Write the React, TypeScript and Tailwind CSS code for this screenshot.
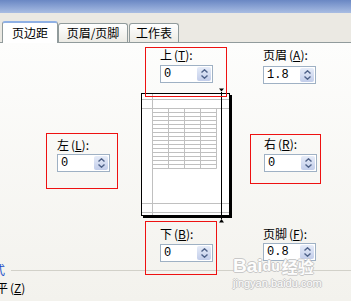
import React from "react";

function Spin({ value }: { value: string }) {
  return (
    <div className="flex h-[18px] w-[53px] border border-[#9fb1c4] bg-white">
      <div className="flex-1 pl-[3px] font-['Liberation_Mono',monospace] text-[12px] leading-[16px] text-black">
        {value}
      </div>
      <div className="m-[1px] flex w-[14px] flex-col items-center justify-center gap-[2px] rounded-[2px] bg-gradient-to-b from-[#e6ecf8] to-[#c2cdea]">
        <svg width="7" height="4" viewBox="0 0 7 4">
          <path d="M0.5 3.5 L3.5 0.8 L6.5 3.5" stroke="#4f6289" strokeWidth="1.4" fill="none" />
        </svg>
        <svg width="7" height="4" viewBox="0 0 7 4">
          <path d="M0.5 0.5 L3.5 3.2 L6.5 0.5" stroke="#4f6289" strokeWidth="1.4" fill="none" />
        </svg>
      </div>
    </div>
  );
}

function Label({ main, k }: { main: string; k: string }) {
  return (
    <div className="h-[14px] whitespace-nowrap text-[12px] leading-[14px] text-black">
      {main}
      <span className="ml-[2px]">(</span>
      <span className="underline">{k}</span>
      <span>):</span>
    </div>
  );
}

function PagePreview() {
  const rows: number[] = [];
  for (let i = 0; i <= 15; i++) rows.push(20.5 + i * 4);
  const cols = [11.5, 27.5, 43.5, 59.5, 75.5];
  return (
    <svg width="92" height="135" viewBox="0 0 92 135" className="-mt-[5px] block shrink-0">
      <rect x="2" y="7" width="89" height="123" fill="#000" />
      <rect x="0.5" y="5.5" width="88" height="122" fill="#fff" stroke="#000" />
      <g stroke="#c0c0c0" strokeWidth="1">
        <line x1="1" y1="11.5" x2="88" y2="11.5" />
        <line x1="1" y1="20.5" x2="88" y2="20.5" />
        <line x1="1" y1="115.5" x2="88" y2="115.5" />
        <line x1="1" y1="124.5" x2="88" y2="124.5" />
        <line x1="11.5" y1="6" x2="11.5" y2="127" />
        {rows.map((y) => (
          <line key={y} x1="11.5" y1={y} x2="75.5" y2={y} />
        ))}
        {cols.map((x) => (
          <line key={x} x1={x} y1="20.5" x2={x} y2="80.5" />
        ))}
      </g>
      <line x1="80.5" y1="4" x2="80.5" y2="131" stroke="#000" strokeWidth="1" />
      <polygon points="78,0.5 83,0.5 80.5,3.5" fill="#000" />
      <polygon points="78,134.5 83,134.5 80.5,131" fill="#000" />
    </svg>
  );
}

export default function App() {
  return (
    <div className="relative h-[301px] w-[351px] overflow-hidden bg-[#ebe9e3] font-['Noto_Sans_CJK_SC',sans-serif] text-[12px] text-black">
      <div className="h-[13px] bg-gradient-to-b from-[#6a87c3] to-[#a9bde3]" />
      <div className="h-[9px]" />
      {/* tabs */}
      <div className="flex h-[20px] items-end pl-[2px]">
        <div className="relative z-10 -mb-px flex h-[22px] w-[56px] items-center justify-center rounded-t-[3px] border border-b-0 border-[#919b9c] border-t-[2px] border-t-[#8fb0e4] bg-white leading-[14px]">
          页边距
        </div>
        <div className="flex h-[19px] w-[70px] items-center justify-center rounded-t-[3px] border border-b-0 border-[#919b9c] bg-gradient-to-b from-white to-[#ecebe5] leading-[14px]">
          页眉/页脚
        </div>
        <div className="ml-px flex h-[19px] w-[50px] items-center justify-center rounded-t-[3px] border border-b-0 border-[#919b9c] bg-gradient-to-b from-white to-[#ecebe5] leading-[14px]">
          工作表
        </div>
      </div>
      {/* panel */}
      <div className="relative h-[259px] border-t border-[#919b9c] bg-gradient-to-b from-[#fdfdfc] to-[#f3f2ed]">
        {/* row A */}
        <div className="flex h-[50px] items-start">
          <div className="relative z-10 ml-[145px] mt-[4px] h-[50px] w-[82px] shrink-0 border border-[#ee1111] pl-[14px]">
            <Label main="上" k="T" />
            <div className="mt-[3px]">
              <Spin value="0" />
            </div>
          </div>
          <div className="ml-[36px] mt-[5px]">
            <Label main="页眉" k="A" />
            <div className="mt-[4px]">
              <Spin value="1.8" />
            </div>
          </div>
        </div>
        {/* row B */}
        <div className="flex h-[125px] items-start">
          <div className="ml-[46px] mt-[40px] h-[56px] w-[72px] shrink-0 border border-[#ee1111] pl-[10px] pt-[4px]">
            <Label main="左" k="L" />
            <div className="mt-[2px]">
              <Spin value="0" />
            </div>
          </div>
          <div className="ml-[23px]">
            <PagePreview />
          </div>
          <div className="ml-[17px] mt-[41px] h-[50px] w-[71px] shrink-0 border border-[#ee1111] pl-[13px] pt-[2px]">
            <Label main="右" k="R" />
            <div className="mt-[3px]">
              <Spin value="0" />
            </div>
          </div>
        </div>
        {/* row C */}
        <div className="flex h-[43px] items-start">
          <div className="relative z-10 ml-[145px] mt-[3px] h-[54px] w-[72px] shrink-0 border border-[#ee1111] pl-[14px] pt-[5px]">
            <Label main="下" k="B" />
            <div className="mt-[3px]">
              <Spin value="0" />
            </div>
          </div>
          <div className="ml-[46px] mt-[9px]">
            <Label main="页脚" k="F" />
            <div className="mt-[2px]">
              <Spin value="0.8" />
            </div>
          </div>
        </div>
        <div className="flex h-[18px] items-center">
          <span className="-ml-[7px] leading-[14px] text-[#1c4fc9]">式</span>
          <div className="ml-[6px] h-px flex-1 bg-[#d2d1c9]" />
        </div>
        <div className="-ml-[4px] mt-px whitespace-nowrap leading-[16px]">
          平<span className="ml-[2px]">(</span>
          <span className="underline">Z</span>)
        </div>
        {/* watermark overlay */}
        <div className="pointer-events-none absolute left-[233px] top-[214px] z-20 flex flex-col items-start opacity-90">
          <div className="flex items-center font-['Liberation_Sans',sans-serif] text-[19px] font-bold leading-[18px] text-white [text-shadow:1px_0_#c4c4c4,-1px_0_#c4c4c4,0_1px_#c4c4c4,0_-1px_#c4c4c4]">
            <span>Bai</span>
            <span className="text-[14px]">du</span>
            <span className="ml-[2px] font-['Noto_Sans_CJK_SC',sans-serif] text-[16px]">经验</span>
          </div>
          <div className="mt-[2px] font-['Liberation_Sans',sans-serif] text-[11px] leading-[12px] text-white [text-shadow:1px_0_#c4c4c4,-1px_0_#c4c4c4,0_1px_#c4c4c4,0_-1px_#c4c4c4]">
            jingyan.baidu.com
          </div>
        </div>
      </div>
    </div>
  );
}
